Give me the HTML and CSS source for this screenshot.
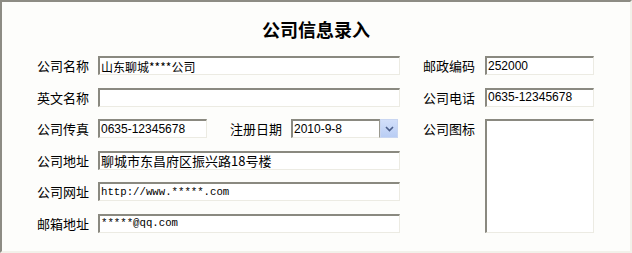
FILE: index.html
```html
<!DOCTYPE html>
<html lang="zh">
<head>
<meta charset="utf-8">
<title>公司信息录入</title>
<link rel="stylesheet" href="styles.css">
</head>
<body>
<div class="frame">
  <h1 class="title">公司信息录入</h1>
  <div class="form">
    <label class="lbl c1">公司名称</label>
    <div class="field wide"><span class="txt sm">山东聊城****公司</span></div>
    <label class="lbl rlbl">邮政编码</label>
    <div class="field"><span class="txt num">252000</span></div>

    <label class="lbl c1">英文名称</label>
    <div class="field wide"></div>
    <label class="lbl rlbl">公司电话</label>
    <div class="field"><span class="txt num">0635-12345678</span></div>

    <label class="lbl c1">公司传真</label>
    <div class="cell">
      <div class="field short"><span class="txt num">0635-12345678</span></div>
      <label class="lbl mid">注册日期</label>
      <div class="combo">
        <div class="field cfield"><span class="txt num">2010-9-8</span></div>
        <div class="drop">
          <svg width="9" height="6" viewBox="0 0 9 6"><path d="M1 1 L4.5 4.5 L8 1" fill="none" stroke="#4b5e8a" stroke-width="1.6"/></svg>
        </div>
      </div>
    </div>
    <label class="lbl rlbl">公司图标</label>
    <div class="field pic"></div>

    <label class="lbl c1">公司地址</label>
    <div class="field wide"><span class="txt">聊城市东昌府区振兴路18号楼</span></div>

    <label class="lbl c1">公司网址</label>
    <div class="field wide"><span class="txt mono">http://www.*****.com</span></div>

    <label class="lbl c1">邮箱地址</label>
    <div class="field wide"><span class="txt mono">*****@qq.com</span></div>
  </div>
</div>
</body>
</html>
```

FILE: styles.css
```css
* { box-sizing: border-box; }
html, body { margin: 0; padding: 0; background: #fdfdfb; }
.frame {
  width: 632px;
  height: 253px;
  background: #fdfdfb;
  border-top: 2px solid #8d8c84;
  border-left: 2px solid #8d8c84;
  border-right: 2px solid #f2f1ea;
  border-bottom: 2px solid #f2f1ea;
  font-family: "Noto Sans CJK SC", "Noto Sans", sans-serif;
  color: #000;
}
.title {
  margin: 0;
  padding-top: 15px;
  height: 54px;
  line-height: 24px;
  font-size: 18px;
  font-weight: bold;
  text-align: center;
}
.form {
  display: grid;
  grid-template-columns: 61px 302px 85px 109px;
  grid-auto-rows: 19px;
  row-gap: 12.5px;
  padding-left: 35px;
}
.lbl {
  font-size: 13px;
  line-height: 19px;
  white-space: nowrap;
}
.c1 { grid-column: 1; }
.rlbl { padding-left: 23px; }
.field {
  height: 19px;
  background: #fff;
  border-top: 2px solid #8a8980;
  border-left: 2px solid #8a8980;
  border-right: 1px solid #ecebe3;
  border-bottom: 1px solid #ecebe3;
  display: flex;
  align-items: center;
  padding-left: 1px;
  overflow: hidden;
}
.wide { width: 302px; grid-column: 2; }
.cell { display: flex; align-items: center; }
.short { width: 109px; flex: none; }
.mid { margin-left: 23px; width: 61px; flex: none; }
.combo { display: flex; width: 107px; height: 19px; }
.cfield { width: 89px; border-right: 1px solid #9a998f; }
.drop {
  width: 18px;
  height: 19px;
  background: linear-gradient(#d2dffa, #b9cdf4);
  border: 1px solid #c9d6f1;
  display: flex;
  align-items: center;
  justify-content: center;
}
.pic { grid-row: 3 / 7; grid-column: 4; height: auto; }
.txt { font-size: 13px; line-height: 15px; white-space: nowrap; }
.sm { font-size: 12px; }
.num { font-family: "Liberation Sans", "DejaVu Sans", sans-serif; font-size: 12px; }
.mono { font-family: "Liberation Mono", "DejaVu Sans Mono", monospace; font-size: 10.7px; }
```
